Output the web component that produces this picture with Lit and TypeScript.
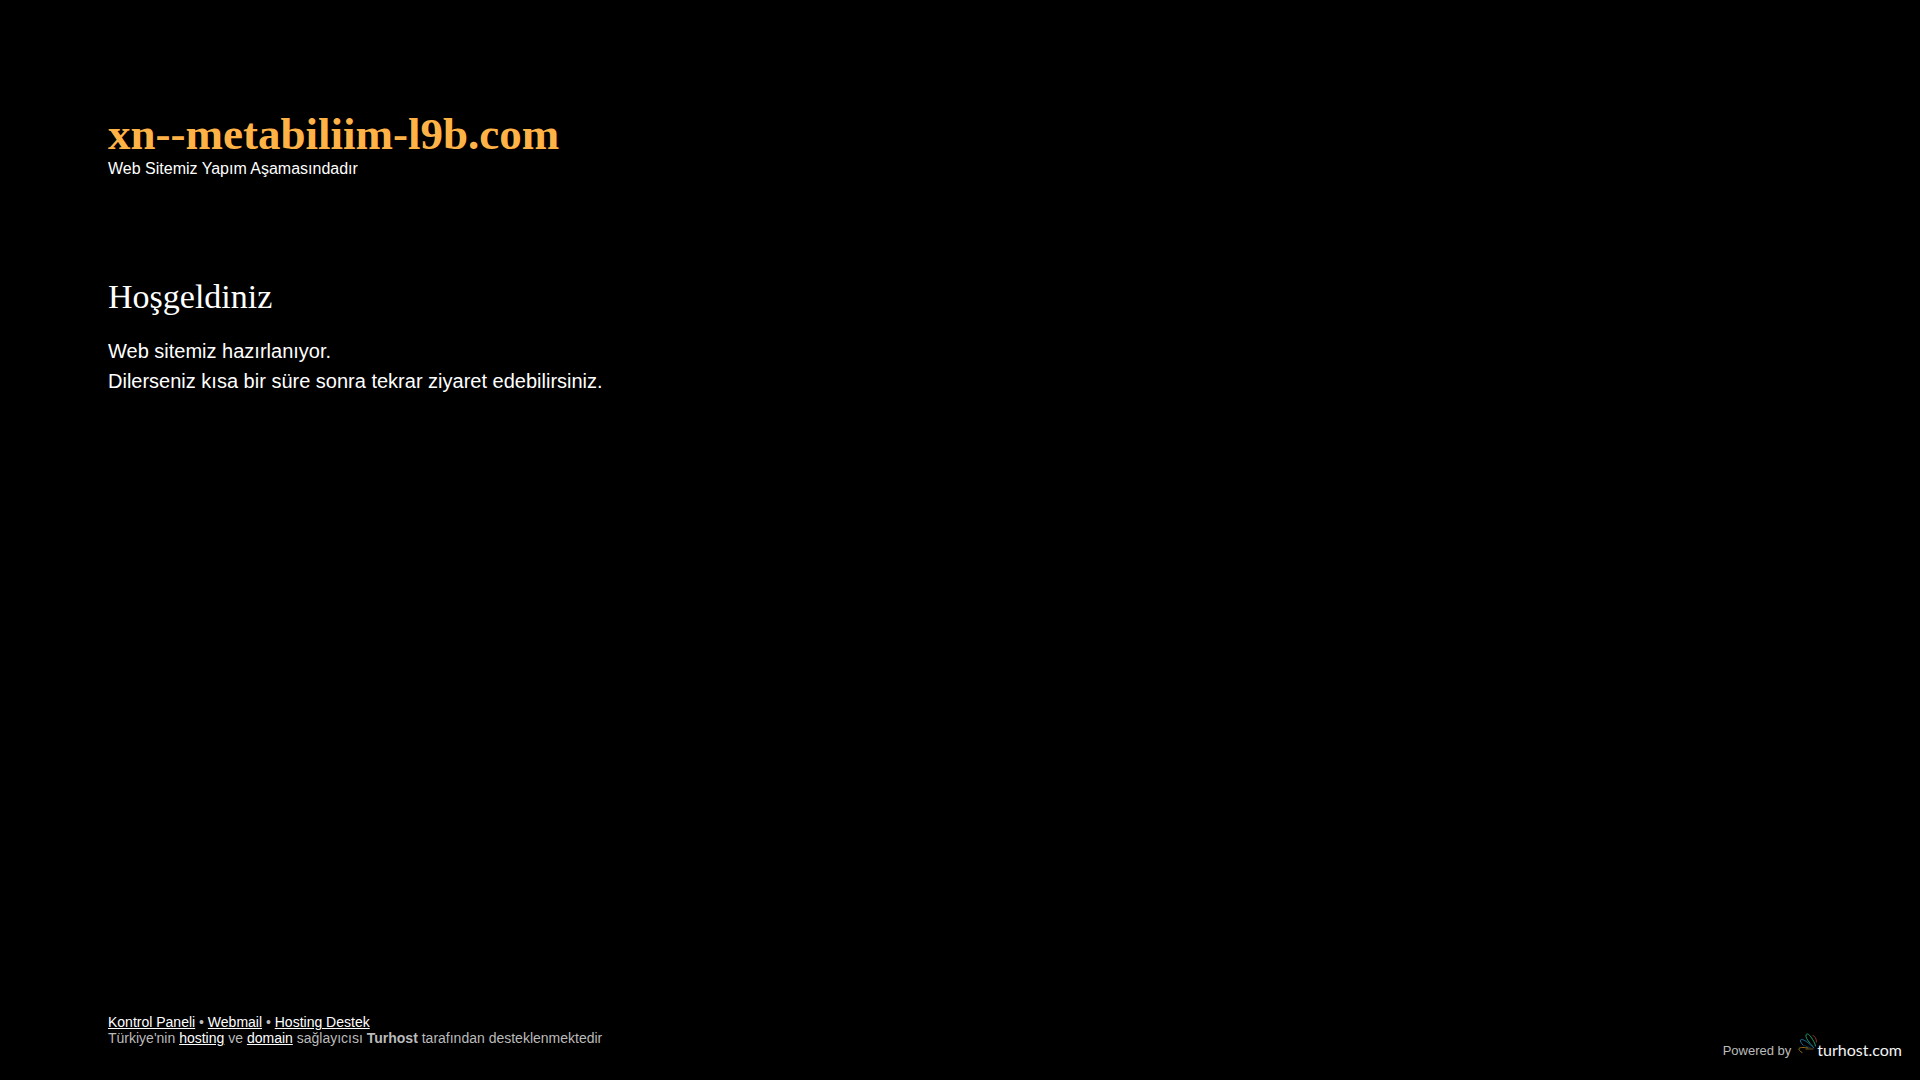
import { LitElement, html, css } from "lit";
import { customElement } from "lit/decorators.js";

@customElement("turhost-logo")
export class TurhostLogo extends LitElement {
  static styles = css`
    :host {
      display: flex;
      align-items: flex-start;
    }
    .mark {
      display: block;
      width: 19px;
      height: 24px;
    }
    .word {
      color: #f4f4f4;
      font: 16px/20px Lato, "Open Sans", sans-serif;
      padding-top: 7px;
    }
  `;

  render() {
    return html`
      <svg class="mark" viewBox="0 0 19 24" fill="none" aria-hidden="true" stroke-linecap="round">
        <path d="M12 10C9 7 7.500 4 8 2C8.500 0 11 1 13 4C15 7 17 10 17.500 13" stroke="#1d9a68" />
        <path d="M12 10L15 13" stroke="#0d4a34" />
        <path d="M5 12C3 10 2 8 2.500 7C4 5.500 8 8 11 10.500L16 15" stroke="#1c6f9c" />
        <path d="M5 12L13 15" stroke="#0b3045" />
        <path d="M15 2.500C17 3 18.500 6 18.500 9" stroke="#8a3329" />
        <path d="M4 19.500C2 18.500 .5 16.500 1 15.500C2 14 7 14.500 10 15" stroke="#9a7520" />
        <path d="M8 16L15 16" stroke="#6b5118" />
      </svg>
      <span class="word">turhost.com</span>
    `;
  }
}

@customElement("app-root")
export class AppRoot extends LitElement {
  static styles = css`
    :host {
      display: flex;
      flex-direction: column;
      box-sizing: border-box;
      min-height: 100vh;
      padding: 108px 18px 20px 108px;
      background: #000;
      color: #fff;
      font-family: "Liberation Sans", Arial, sans-serif;
    }
    h1,
    h2,
    p {
      margin: 0;
    }
    h1,
    h2 {
      font-family: "Liberation Serif", "Times New Roman", serif;
    }
    h1 {
      color: #ffb347;
      font-size: 45px;
      line-height: 52px;
    }
    .tagline {
      font-size: 16px;
      line-height: 18px;
    }
    main {
      flex: 1;
      padding-top: 99px;
    }
    h2 {
      font-size: 34px;
      font-weight: 400;
      line-height: 40px;
    }
    .message {
      padding-top: 19px;
      font-size: 20px;
      line-height: 30px;
    }
    footer {
      display: flex;
      justify-content: space-between;
      align-items: flex-end;
      color: #bbb;
    }
    .links {
      padding-bottom: 14px;
      font-size: 14px;
      line-height: 16px;
    }
    a {
      color: #fff;
    }
    .powered {
      display: flex;
      align-items: flex-end;
      gap: 7px;
      font-size: 13px;
      line-height: 19px;
    }
    .powered a {
      text-decoration: none;
    }
  `;

  render() {
    return html`
      <header>
        <h1>xn--metabiliim-l9b.com</h1>
        <p class="tagline">Web Sitemiz Yapım Aşamasındadır</p>
      </header>
      <main>
        <h2>Hoşgeldiniz</h2>
        <p class="message">
          Web sitemiz hazırlanıyor.<br />Dilerseniz kısa bir süre sonra tekrar ziyaret edebilirsiniz.
        </p>
      </main>
      <footer>
        <div class="links">
          <p><a href="#panel">Kontrol Paneli</a> • <a href="#webmail">Webmail</a> • <a href="#destek">Hosting Destek</a></p>
          <p>
            Türkiye'nin <a href="#hosting">hosting</a> ve <a href="#domain">domain</a> sağlayıcısı
            <strong>Turhost</strong> tarafından desteklenmektedir
          </p>
        </div>
        <div class="powered">
          <span>Powered by</span>
          <a href="#turhost"><turhost-logo></turhost-logo></a>
        </div>
      </footer>
    `;
  }
}
